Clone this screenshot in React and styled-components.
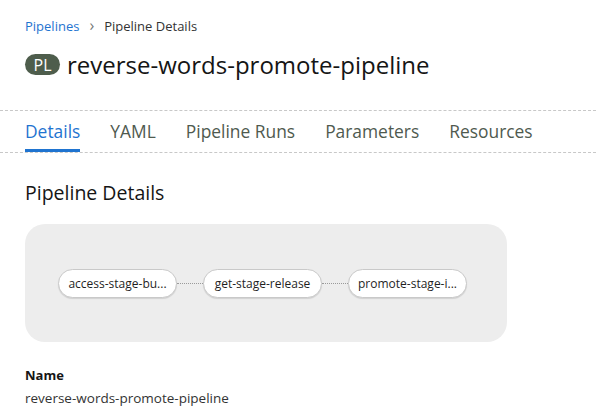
import styled, { createGlobalStyle } from "styled-components";

const GlobalStyle = createGlobalStyle`
  body {
    margin: 0;
    background: #fff;
    font-family: "Open Sans", "Liberation Sans", sans-serif;
    color: #151515;
  }
`;

const tabs = ["Details", "YAML", "Pipeline Runs", "Parameters", "Resources"];
const tasks = ["access-stage-bu...", "get-stage-release", "promote-stage-i..."];

const App = () => {
  return (
    <Page>
      <GlobalStyle />
      <Header>
        <Breadcrumb>
          <Crumb href="#">Pipelines</Crumb>
          <Chevron>›</Chevron>
          <span>Pipeline Details</span>
        </Breadcrumb>
        <TitleRow>
          <Badge>PL</Badge>
          <Title>reverse-words-promote-pipeline</Title>
        </TitleRow>
      </Header>
      <TabBar>
        {tabs.map((t, i) => (
          <Tab key={t} $active={i === 0}>
            {t}
          </Tab>
        ))}
      </TabBar>
      <Section>
        <SectionTitle>Pipeline Details</SectionTitle>
        <Graph>
          {tasks.map((t, i) => (
            <Step key={t}>
              {i > 0 && <Connector />}
              <Node>{t}</Node>
            </Step>
          ))}
        </Graph>
        <Field>
          <Label>Name</Label>
          <Value>reverse-words-promote-pipeline</Value>
        </Field>
      </Section>
    </Page>
  );
};

export default App;

const Page = styled.div`
  width: 596px;
  height: 419px;
  overflow: hidden;
`;

const Header = styled.div`
  padding: 17px 25px 0;
  height: 93px;
  box-sizing: border-box;
`;

const Breadcrumb = styled.div`
  display: flex;
  align-items: center;
  gap: 10px;
  font-size: 13px;
  color: #333;
  height: 18px;
`;

const Crumb = styled.a`
  color: #1f74d0;
  text-decoration: none;
`;

const Chevron = styled.span`
  color: #777;
  font-size: 16px;
  line-height: 1;
  padding-bottom: 2px;
`;

const TitleRow = styled.div`
  display: flex;
  align-items: center;
  gap: 7px;
  margin-top: 13px;
`;

const Badge = styled.span`
  display: inline-flex;
  align-items: center;
  justify-content: center;
  width: 35px;
  height: 21px;
  border-radius: 11px;
  background: #4e5d4c;
  color: #fff;
  font-size: 16px;
`;

const Title = styled.h1`
  margin: 0;
  font-size: 24px;
  font-weight: 400;
  color: #151515;
`;

const TabBar = styled.div`
  display: flex;
  gap: 30px;
  padding: 0 25px;
  margin-top: 17px;
  height: 41px;
  border-top: 1px dashed #c8c8c8;
  border-bottom: 1px dashed #c8c8c8;
`;

const Tab = styled.div`
  display: flex;
  align-items: center;
  font-size: 17.4px;
  color: ${(p) => (p.$active ? "#1f74d0" : "#4f5a4f")};
  box-shadow: ${(p) => (p.$active ? "inset 0 -3px 0 #1f74d0" : "none")};
  padding-bottom: 2px;
  white-space: nowrap;
`;

const Section = styled.div`
  padding: 26px 25px 0;
`;

const SectionTitle = styled.h2`
  margin: 0;
  font-size: 19.5px;
  font-weight: 400;
  color: #151515;
`;

const Graph = styled.div`
  margin-top: 18px;
  width: 482px;
  height: 118px;
  border-radius: 20px;
  background: #ededed;
  display: flex;
  align-items: center;
  padding-left: 33px;
  box-sizing: border-box;
`;

const Step = styled.div`
  display: flex;
  align-items: center;
`;

const Connector = styled.div`
  width: 26px;
  border-top: 1px dotted #9a9a9a;
`;

const Node = styled.div`
  width: 119px;
  height: 29px;
  box-sizing: border-box;
  border: 1px solid #c9c9c9;
  border-radius: 15px;
  background: #fff;
  box-shadow: 0 1px 1px rgba(0, 0, 0, 0.12);
  display: flex;
  align-items: center;
  justify-content: center;
  font-size: 12px;
  color: #1f1f1f;
  white-space: nowrap;
`;

const Field = styled.div`
  margin-top: 24px;
`;

const Label = styled.div`
  font-size: 13px;
  font-weight: 700;
  color: #151515;
`;

const Value = styled.div`
  margin-top: 5px;
  font-size: 13.5px;
  color: #333;
`;
